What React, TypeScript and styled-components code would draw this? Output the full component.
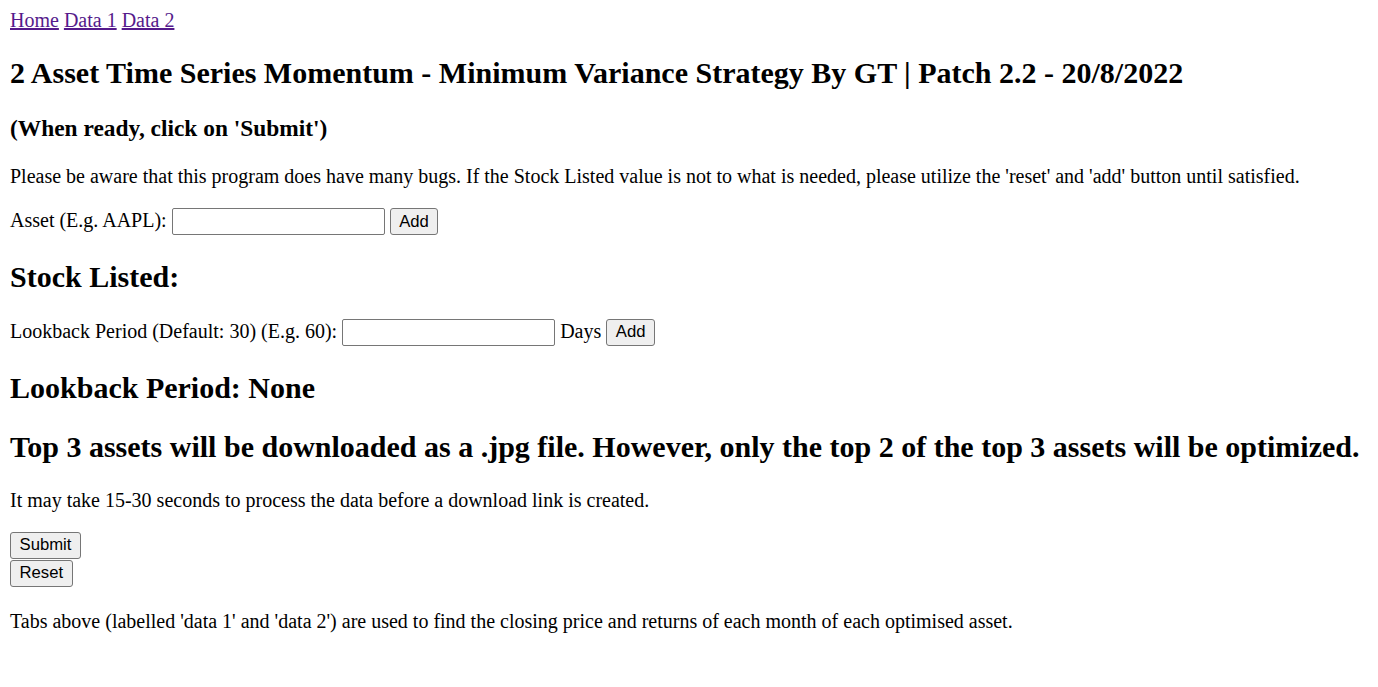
import styled, { createGlobalStyle } from 'styled-components';

const GlobalStyle = createGlobalStyle`
    body {
        margin: 10px;
        font-family: 'Liberation Serif', 'Times New Roman', serif;
        font-size: 20px;
        color: #000;
        background: #fff;
    }
`;

const StyledNav = styled.nav`
    line-height: 21px;

    a {
        color: #551a8b;
        text-decoration: underline;
    }
`;

const StyledTitle = styled.h2`
    font-size: 30px;
    font-weight: bold;
    margin: 24.9px 0;
`;

const StyledSubtitle = styled.h3`
    font-size: 23.4px;
    font-weight: bold;
    margin: 23.4px 0;
`;

const StyledText = styled.p`
    margin: 20px 0;
`;

const StyledForm = styled.form`
    margin: 0;
`;

const StyledInput = styled.input`
    box-sizing: border-box;
    width: 213px;
    height: 27px;
    padding: 1px 2px;
    border: 1px solid #767676;
    border-radius: 2px;
    font-family: 'Liberation Sans', Arial, sans-serif;
    font-size: 16.7px;
    background: #fff;
    vertical-align: baseline;
`;

interface StyledButtonProps {
    $block?: boolean;
}

const StyledButton = styled.button<StyledButtonProps>`
    display: ${props => (props.$block ? 'block' : 'inline-block')};
    box-sizing: border-box;
    height: 27px;
    padding: 0 8.5px;
    margin: ${props => (props.$block ? '0 0 1px' : '0')};
    border: 1px solid #767676;
    border-radius: 3px;
    background: #efefef;
    color: #000;
    font-family: 'Liberation Sans', Arial, sans-serif;
    font-size: 16.7px;
`;

const StyledButtonStack = styled.div`
    margin: 20px 0 23px;
`;

function App() {
    return (
        <>
            <GlobalStyle />
            <StyledNav>
                <a href='#'>Home</a> <a href='#'>Data 1</a> <a href='#'>Data 2</a>
            </StyledNav>
            <StyledTitle>2 Asset Time Series Momentum - Minimum Variance Strategy By GT | Patch 2.2 - 20/8/2022</StyledTitle>
            <StyledSubtitle>(When ready, click on 'Submit')</StyledSubtitle>
            <StyledText>
                Please be aware that this program does have many bugs. If the Stock Listed value is not to what is
                needed, please utilize the 'reset' and 'add' button until satisfied.
            </StyledText>
            <StyledForm onSubmit={e => e.preventDefault()}>
                Asset (E.g. AAPL): <StyledInput type='text' /> <StyledButton type='button'>Add</StyledButton>
            </StyledForm>
            <StyledTitle>Stock Listed:</StyledTitle>
            <StyledForm onSubmit={e => e.preventDefault()}>
                Lookback Period (Default: 30) (E.g. 60): <StyledInput type='text' /> Days{' '}
                <StyledButton type='button'>Add</StyledButton>
            </StyledForm>
            <StyledTitle>Lookback Period: None</StyledTitle>
            <StyledTitle>
                Top 3 assets will be downloaded as a .jpg file. However, only the top 2 of the top 3 assets will be
                optimized.
            </StyledTitle>
            <StyledText>It may take 15-30 seconds to process the data before a download link is created.</StyledText>
            <StyledButtonStack>
                <StyledButton type='button' $block>
                    Submit
                </StyledButton>
                <StyledButton type='button' $block>
                    Reset
                </StyledButton>
            </StyledButtonStack>
            <StyledText>
                Tabs above (labelled 'data 1' and 'data 2') are used to find the closing price and returns of each month
                of each optimised asset.
            </StyledText>
        </>
    );
}

export default App;
